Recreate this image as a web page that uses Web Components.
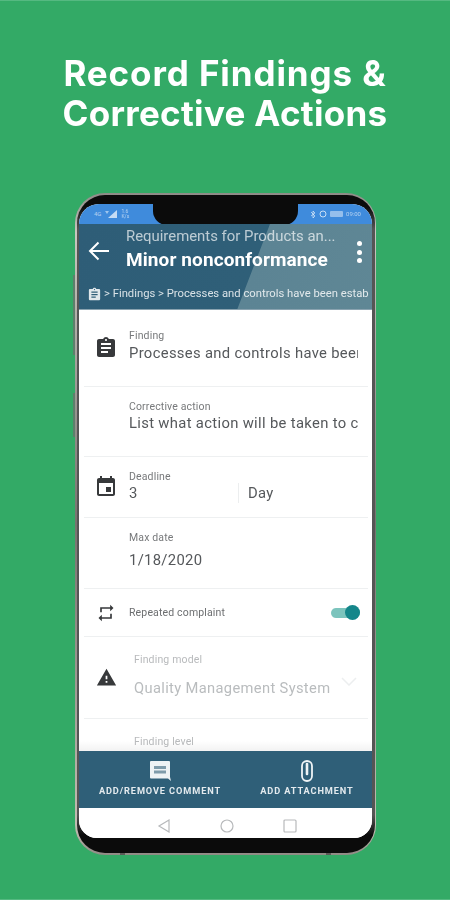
<!DOCTYPE html>
<html>
<head>
<meta charset="utf-8">
<title>Record Findings</title>
<style>
  html, body { margin: 0; padding: 0; }
  body { width: 450px; height: 900px; overflow: hidden; background: #33aa66; font-family: Roboto, "Liberation Sans", sans-serif; }
</style>
</head>
<body>
<promo-page>
  <span slot="title"><span style="letter-spacing:.9px">Record Findings &amp;</span><br>Corrective Actions</span>
  <phone-frame>
    <status-bar></status-bar>
    <app-header sub="Requirements for Products an..." title-text="Minor nonconformance" crumb="&gt; Findings &gt; Processes and controls have been estab"></app-header>
    <form-list>
      <form-row icon="assignment" label="Finding" h="77" pad="19" gap="1"><span>Processes and controls have been</span></form-row>
      <form-row label="Corrective action" h="70" pad="13" gap="0"><span>List what action will be taken to co</span></form-row>
      <form-row icon="event" label="Deadline" h="61" pad="13" gap="0" split="Day"><span>3</span></form-row>
      <form-row label="Max date" h="71" pad="13" gap="6"><span>1/18/2020</span></form-row>
      <switch-row label="Repeated complaint"></switch-row>
      <form-row icon="warning" label="Finding model" h="82" pad="16" gap="12" muted chevron><span>Quality Management System</span></form-row>
      <form-row label="Finding level" h="33" pad="16" gap="9" muted last></form-row>
    </form-list>
    <action-bar></action-bar>
    <nav-bar></nav-bar>
  </phone-frame>
</promo-page>

<script>
const ICONS = {
  assignment: 'M19 3h-4.18C14.4 1.84 13.3 1 12 1c-1.3 0-2.4.84-2.82 2H5c-1.1 0-2 .9-2 2v14c0 1.1.9 2 2 2h14c1.1 0 2-.9 2-2V5c0-1.1-.9-2-2-2zm-7 0c.55 0 1 .45 1 1s-.45 1-1 1-1-.45-1-1 .45-1 1-1zm2 14H7v-2h7v2zm3-4H7v-2h10v2zm0-4H7V7h10v2z',
  event: 'M17 12h-5v5h5v-5zM16 1v2H8V1H6v2H5c-1.11 0-1.99.9-1.99 2L3 19c0 1.1.89 2 2 2h14c1.1 0 2-.9 2-2V5c0-1.1-.9-2-2-2h-1V1h-2zm3 18H5V8h14v11z',
  repeat: 'M7 7h10v3l4-4-4-4v3H5v6h2V7zm10 10H7v-3l-4 4 4 4v-3h12v-6h-2v4z',
  warning: 'M1 21h22L12 2 1 21zm12-3h-2v-2h2v2zm0-4h-2v-4h2v4z'
}

class PromoPage extends HTMLElement {
  connectedCallback() {
    let shadowRoot = this.attachShadow({mode: 'open'})
    shadowRoot.innerHTML = `
    <style>
      :host {
        display: flex;
        flex-direction: column;
        align-items: center;
        box-sizing: border-box;
        height: 900px;
        border-top: 1px solid #55b981;
        border-bottom: 1px solid #55b981;
        filter: blur(.35px);
      }
      h1 {
        margin: 52px 0 0;
        height: 140px;
        color: #fff;
        font: 700 35px/40px Inter, "Open Sans", sans-serif;
        letter-spacing: .3px;
        text-align: center;
        white-space: nowrap;
      }
    </style>
    <h1><slot name="title"></slot></h1>
    <slot></slot>
    `
  }
}

class PhoneFrame extends HTMLElement {
  connectedCallback() {
    let shadowRoot = this.attachShadow({mode: 'open'})
    shadowRoot.innerHTML = `
    <style>
      :host { display: block; position: relative; width: 301px; height: 662px; margin-left: 1px; }
      .body {
        box-sizing: border-box;
        height: 662px;
        border-radius: 30px;
        background: linear-gradient(#8d8a86, #c9c6c0 6%, #77736f 50%, #c3bdb3 96%, #8f8a84);
        padding: 2px 1.5px;
      }
      .black {
        box-sizing: border-box;
        height: 658px;
        border-radius: 28px;
        background: linear-gradient(#0b0b0b 12px, #555 34px, #555 620px, #0b0b0b 640px);
        padding: 9px 2.5px 15px;
      }
      .screen {
        display: flex;
        flex-direction: column;
        height: 634px;
        border-radius: 20px 20px 18px 18px;
        overflow: hidden;
        background: #fff;
      }
      .btn { position: absolute; left: -2px; width: 2px; background: #5d7f6b; }
      .mark { position: absolute; bottom: 0; width: 5px; height: 2px; background: #5c5a57; }
    </style>
    <div class="btn" style="top:82px;height:80px"></div>
    <div class="btn" style="top:200px;height:44px"></div>
    <div class="body"><div class="black"><div class="screen"><slot></slot></div></div></div>
    <div class="mark" style="left:45px"></div>
    <div class="mark" style="left:251px"></div>
    `
  }
}

class StatusBar extends HTMLElement {
  connectedCallback() {
    let shadowRoot = this.attachShadow({mode: 'open'})
    shadowRoot.innerHTML = `
    <style>
      :host {
        display: flex;
        align-items: center;
        flex: none;
        height: 20px;
        background: #3f8bdc;
        color: rgba(255,255,255,.6);
        font: 6px/6px Roboto, sans-serif;
      }
      .left { display: flex; align-items: center; gap: 3px; padding-left: 15px; box-sizing: border-box; width: 74px; }
      .notch { flex: none; width: 145px; height: 21px; margin-top: 1px; background: #0b0b0b; border-radius: 0 0 14px 14px; }
      .right { display: flex; align-items: center; gap: 3px; justify-content: flex-end; flex: 1; padding-right: 11px; }
      .speed { font-size: 5px; line-height: 5px; }
    </style>
    <div class="left">
      <span>4G</span>
      <svg width="14" height="8" viewBox="0 0 14 8"><path d="M13 0v8H4z" fill="rgba(255,255,255,.7)"/><path d="M1 1h4L3 4z" fill="rgba(255,255,255,.5)"/></svg>
      <span class="speed">1.6<br>K/s</span>
    </div>
    <div class="notch"></div>
    <div class="right">
      <svg width="6" height="9" viewBox="0 0 6 9"><path d="M1 2l4 4-2 2V1l2 2-4 3" fill="none" stroke="rgba(255,255,255,.7)" stroke-width=".8"/></svg>
      <svg width="8" height="8" viewBox="0 0 8 8"><circle cx="4" cy="4" r="3" fill="none" stroke="rgba(255,255,255,.7)"/></svg>
      <span style="width:13px;height:6px;background:rgba(255,255,255,.45);border-radius:1px"></span>
      <span>09:00</span>
    </div>
    `
  }
}

class AppHeader extends HTMLElement {
  connectedCallback() {
    let shadowRoot = this.attachShadow({mode: 'open'})
    shadowRoot.innerHTML = `
    <style>
      :host {
        display: block;
        flex: none;
        height: 86px;
        box-sizing: border-box;
        color: #fff;
        background: linear-gradient(111deg, #2e5d77 0, #2f5f78 58.5%, #5c8494 58.8%, #5f8795 100%);
        border-bottom: 1px solid #8aa3b0;
      }
      .top { display: flex; align-items: center; height: 56px; }
      .back { flex: none; width: 47px; padding: 0 0 2px 9px; box-sizing: border-box; display: flex; }
      .text { flex: 1; min-width: 0; padding-bottom: 7px; }
      .sub { font-size: 14.9px; line-height: 17px; margin-top: 2px; color: rgba(255,255,255,.68); white-space: nowrap; }
      .ttl { font-size: 19px; line-height: 24px; margin-top: 3px; font-weight: 700; letter-spacing: .1px; white-space: nowrap; }
      .more { flex: none; width: 24px; display: flex; flex-direction: column; gap: 3.5px; align-items: center; margin-right: 1px; }
      .more i { width: 5px; height: 5px; border-radius: 50%; background: #fff; }
      .crumb {
        display: flex;
        align-items: center;
        gap: 2px;
        margin-top: 6px;
        padding-left: 8px;
        font-size: 11.25px;
        line-height: 16px;
        color: rgba(255,255,255,.82);
        white-space: nowrap;
        overflow: hidden;
      }
      svg { flex: none; }
    </style>
    <div class="top">
      <div class="back">
        <svg width="21" height="20" viewBox="0 0 21 20"><path fill="none" stroke="#fff" stroke-width="2" d="M21 10H2.500M10.500 1.500L2 10l8.500 8.500"/></svg>
      </div>
      <div class="text">
        <div class="sub">${this.getAttribute('sub')}</div>
        <div class="ttl">${this.getAttribute('title-text')}</div>
      </div>
      <div class="more"><i></i><i></i><i></i></div>
    </div>
    <div class="crumb">
      <svg width="15" height="15" viewBox="0 0 24 24"><path fill="rgba(255,255,255,.85)" d="${ICONS.assignment}"/></svg>
      <span>${this.getAttribute('crumb').replace(/>/g, '&gt;')}</span>
    </div>
    `
  }
}

class FormList extends HTMLElement {
  connectedCallback() {
    let shadowRoot = this.attachShadow({mode: 'open'})
    shadowRoot.innerHTML = `
    <style>
      :host { display: flex; flex-direction: column; flex: none; height: 441px; overflow: hidden; background: #fff; position: relative; }
      .shade { position: absolute; left: 0; right: 0; bottom: 0; height: 10px; background: linear-gradient(rgba(0,0,0,0), rgba(0,0,0,.05)); }
    </style>
    <slot></slot>
    <div class="shade"></div>
    `
  }
}

class FormRow extends HTMLElement {
  connectedCallback() {
    const icon = this.getAttribute('icon')
    const split = this.getAttribute('split')
    const muted = this.hasAttribute('muted')
    const size = icon == 'warning' ? 21 : 24
    let shadowRoot = this.attachShadow({mode: 'open'})
    shadowRoot.innerHTML = `
    <style>
      :host {
        display: flex;
        flex: none;
        box-sizing: border-box;
        height: ${this.getAttribute('h')}px;
        margin: 0 4px 0 5px;
        border-bottom: ${this.hasAttribute('last') ? 0 : '1px solid #eef0f1'};
        position: relative;
      }
      .icon { flex: none; width: 45px; padding-left: ${icon == 'warning' ? 12 : 10}px; box-sizing: border-box; display: flex; align-items: center; }
      .body { flex: 1; min-width: 0; padding: ${this.getAttribute('pad')}px 0 0 ${muted ? 5 : 0}px; margin-right: 10px; color: ${muted ? '#b9bcbe' : '#55585b'}; }
      label { display: block; font-size: 10.5px; line-height: 13px; letter-spacing: .15px; color: ${muted ? '#b8babc' : '#77797b'}; }
      .value { display: flex; margin-top: ${this.getAttribute('gap')}px; font-size: ${muted ? 14.7 : 14.8}px; line-height: 20px; letter-spacing: ${muted ? .35 : .33}px; }
      .clip { ${split ? 'width: 109px; flex: none;' : 'flex: 1;'} min-width: 0; overflow: hidden; white-space: nowrap; }
      .split { border-left: 1px solid #eceeef; padding-left: 9px; }
      .chev { position: absolute; right: 11px; top: 40px; }
      svg path.g { fill: #37393b; }
    </style>
    <div class="icon">${icon ? `<svg width="${size}" height="${size}" viewBox="0 0 24 24"><path class="g" d="${ICONS[icon]}"/></svg>` : ''}</div>
    <div class="body">
      <label>${this.getAttribute('label')}</label>
      <div class="value">
        <div class="clip"><slot></slot></div>
        ${split ? `<div class="split">${split}</div>` : ''}
      </div>
    </div>
    ${this.hasAttribute('chevron') ? '<svg class="chev" width="16" height="9" viewBox="0 0 16 9"><path d="M1 1l7 7 7-7" fill="none" stroke="#eceeef" stroke-width="1.5"/></svg>' : ''}
    `
  }
}

class SwitchRow extends HTMLElement {
  connectedCallback() {
    let shadowRoot = this.attachShadow({mode: 'open'})
    shadowRoot.innerHTML = `
    <style>
      :host {
        display: flex;
        align-items: center;
        flex: none;
        box-sizing: border-box;
        height: 48px;
        margin: 0 4px 0 5px;
        border-bottom: 1px solid #eef0f1;
      }
      .icon { flex: none; width: 45px; padding-left: 12px; box-sizing: border-box; display: flex; }
      span.t { flex: 1; font-size: 10.5px; letter-spacing: .15px; color: #6c6e70; }
      .sw { position: relative; width: 29px; height: 10px; margin-right: 8px; border-radius: 5px; background: #7cc4bd; }
      .sw i { position: absolute; right: 0; top: -3px; width: 15px; height: 15px; border-radius: 50%; background: #14868a; }
    </style>
    <div class="icon"><svg width="20" height="20" viewBox="0 0 24 24"><path fill="#37393b" d="${ICONS.repeat}"/></svg></div>
    <span class="t">${this.getAttribute('label')}</span>
    <div class="sw"><i></i></div>
    `
  }
}

class ActionBar extends HTMLElement {
  connectedCallback() {
    let shadowRoot = this.attachShadow({mode: 'open'})
    shadowRoot.innerHTML = `
    <style>
      :host {
        display: flex;
        flex: none;
        height: 57px;
        background: #2f5f78;
        color: #e3eaee;
        font: 700 9.2px/10px Roboto, sans-serif;
        letter-spacing: .9px;
      }
      div { display: flex; flex-direction: column; align-items: center; padding-top: 9px; box-sizing: border-box; white-space: nowrap; }
      .a { width: 162px; }
      .b { flex: 1; padding-left: 1px; }
      svg { height: 22px; margin-bottom: 4px; }
    </style>
    <div class="a">
      <svg width="22" height="22" viewBox="0 0 22 22"><path fill="#eef3f5" d="M2 1h18a1 1 0 0 1 1 1v15l1 4-3-2.500H2a1 1 0 0 1-1-1V2a1 1 0 0 1 1-1z"/><path fill="#7f9cab" d="M5 6h12v3H5zM5 10.500h12v3H5z"/></svg>
      <span>ADD/REMOVE COMMENT</span>
    </div>
    <div class="b">
      <svg width="16" height="22" viewBox="0 0 16 22"><rect x="3" y="1" width="10" height="20" rx="5" fill="none" stroke="#eef3f5" stroke-width="1.8"/><path d="M8 4v10" stroke="#eef3f5" stroke-width="2.600" stroke-linecap="round"/></svg>
      <span>ADD ATTACHMENT</span>
    </div>
    `
  }
}

class NavBar extends HTMLElement {
  connectedCallback() {
    let shadowRoot = this.attachShadow({mode: 'open'})
    shadowRoot.innerHTML = `
    <style>
      :host { display: flex; flex: 1; align-items: center; justify-content: center; gap: 49px; background: #fff; padding: 6px 0 0 3px; box-sizing: border-box; }
      svg { display: block; }
    </style>
    <svg width="14" height="14" viewBox="0 0 14 14"><path d="M12 1L2 7l10 6z" fill="none" stroke="#b7b9bb" stroke-width="1.200"/></svg>
    <svg width="14" height="14" viewBox="0 0 14 14"><circle cx="7" cy="7" r="6" fill="none" stroke="#b7b9bb" stroke-width="1.200"/></svg>
    <svg width="14" height="14" viewBox="0 0 14 14"><rect x="1" y="1" width="12" height="12" rx="1" fill="none" stroke="#b7b9bb" stroke-width="1.200"/></svg>
    `
  }
}

window.customElements.define('promo-page', PromoPage)
window.customElements.define('phone-frame', PhoneFrame)
window.customElements.define('status-bar', StatusBar)
window.customElements.define('app-header', AppHeader)
window.customElements.define('form-list', FormList)
window.customElements.define('form-row', FormRow)
window.customElements.define('switch-row', SwitchRow)
window.customElements.define('action-bar', ActionBar)
window.customElements.define('nav-bar', NavBar)
</script>
</body>
</html>
